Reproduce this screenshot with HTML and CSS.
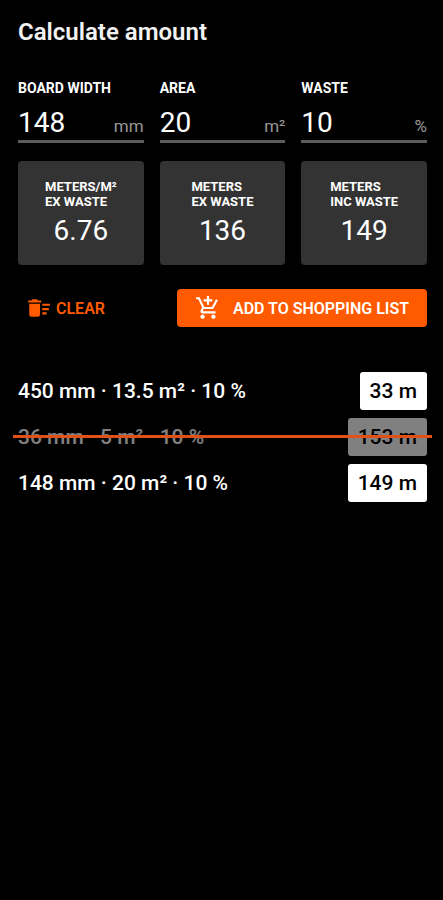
FILE: index.html
```
<!DOCTYPE html>
<html lang="en">
<head>
    <meta charset="UTF-8">
    <meta name="viewport" content="width=device-width, initial-scale=1.0">
    <title>Calculate amount</title>
    <link rel="stylesheet" href="styles.css">
</head>
<body>
    <main class="page">
        <h1>Calculate amount</h1>

        <form id="form">
            <div class="columns">
                <div class="field">
                    <label for="width">BOARD WIDTH</label>
                    <div class="field-row">
                        <input type="text" id="width" value="148" inputmode="decimal">
                        <span class="unit">mm</span>
                    </div>
                </div>
                <div class="field">
                    <label for="area">AREA</label>
                    <div class="field-row">
                        <input type="text" id="area" value="20" inputmode="decimal">
                        <span class="unit">m²</span>
                    </div>
                </div>
                <div class="field">
                    <label for="waste">WASTE</label>
                    <div class="field-row">
                        <input type="text" id="waste" value="10" inputmode="decimal">
                        <span class="unit">%</span>
                    </div>
                </div>
            </div>

            <div class="columns results">
                <div class="card">
                    <div class="card-label">METERS/M²<br>EX WASTE</div>
                    <output>6.76</output>
                </div>
                <div class="card">
                    <div class="card-label">METERS<br>EX WASTE</div>
                    <output>136</output>
                </div>
                <div class="card">
                    <div class="card-label">METERS<br>INC WASTE</div>
                    <output>149</output>
                </div>
            </div>

            <div class="actions">
                <button type="reset" class="clear">
                    <svg class="icon" viewBox="0 0 24 24" aria-hidden="true"><path d="M15 16h4v2h-4zm0-8h7v2h-7zm0 4h6v2h-6zM3 18c0 1.1.9 2 2 2h6c1.1 0 2-.9 2-2V8H3v10zM14 5h-3l-1-1H6L5 5H2v2h12z"/></svg>
                    CLEAR
                </button>
                <button type="submit" class="add">
                    <svg class="icon" viewBox="0 0 24 24" aria-hidden="true"><path d="M11 9h2V6h3V4h-3V1h-2v3H8v2h3v3zm-4 9c-1.1 0-1.99.9-1.99 2S5.9 22 7 22s2-.9 2-2-.9-2-2-2zm10 0c-1.1 0-1.99.9-1.99 2s.89 2 1.99 2 2-.9 2-2-.9-2-2-2zm-9.83-3.25l.03-.12.9-1.63h7.45c.75 0 1.41-.41 1.75-1.03l3.86-7.01L19.42 4h-.01l-1.1 2-2.76 5H8.53l-.13-.27L6.16 6l-.95-2-.94-2H1v2h2l3.6 7.59-1.35 2.45c-.16.28-.25.61-.25.96 0 1.1.9 2 2 2h12v-2H7.42c-.13 0-.25-.11-.25-.25z"/></svg>
                    ADD TO SHOPPING LIST
                </button>
            </div>
        </form>

        <ul class="list">
            <li>
                <span class="item">450 mm · 13.5 m² · 10 %</span>
                <span class="total">33 m</span>
            </li>
            <li class="done">
                <span class="item">36 mm · 5 m² · 10 %</span>
                <span class="total">153 m</span>
            </li>
            <li>
                <span class="item">148 mm · 20 m² · 10 %</span>
                <span class="total">149 m</span>
            </li>
        </ul>
    </main>
</body>
</html>
```
FILE: styles.css
```
* {
    box-sizing: border-box;
}

body {
    margin: 0;
    background-color: #000;
    color: #fff;
    font-family: Roboto, "Liberation Sans", sans-serif;
}

.page {
    padding: 16px 16px 16px 18px;
}

h1 {
    margin: 0 0 32px;
    font-size: 24px;
    font-weight: 600;
    line-height: 32px;
    color: #f2f2f2;
}

/* Three equal columns, shared by the fields and the results */
.columns {
    display: grid;
    grid-template-columns: repeat(3, minmax(0, 1fr));
    gap: 16px;
}

.field label {
    display: block;
    font-size: 14px;
    font-weight: 700;
    line-height: 16px;
}

.field-row {
    display: flex;
    align-items: baseline;
    margin-top: 8px;
    border-bottom: 3px solid #5c5c5c;
}

.field input {
    flex: 1;
    min-width: 0;
    height: 36px;
    padding: 0;
    border: none;
    outline: none;
    background: none;
    color: #fff;
    font-family: inherit;
    font-size: 28px;
}

.unit {
    font-size: 17px;
    color: #999;
}

/* Results */
.results {
    margin-top: 18px;
}

.card {
    display: flex;
    flex-direction: column;
    align-items: center;
    padding: 18px 8px 16px;
    border-radius: 4px;
    background-color: #333;
}

.card-label {
    font-size: 13px;
    font-weight: 700;
    line-height: 15px;
}

.card output {
    margin-top: 4px;
    font-size: 28px;
    line-height: 36px;
}

/* Buttons */
.actions {
    display: flex;
    justify-content: space-between;
    margin-top: 24px;
}

button {
    display: flex;
    align-items: center;
    height: 38px;
    border: none;
    border-radius: 4px;
    font-family: inherit;
    font-size: 16px;
    font-weight: 600;
    cursor: pointer;
}

.icon {
    width: 26px;
    height: 26px;
    fill: currentColor;
}

.clear {
    gap: 4px;
    padding: 0 8px;
    background: none;
    color: #ff5a00;
}

.add {
    gap: 12px;
    padding: 0 18px;
    background-color: #ff5a00;
    color: #fff;
}

/* Shopping list */
.list {
    display: flex;
    flex-direction: column;
    gap: 8px;
    margin: 45px 0 0;
    padding: 0;
    list-style: none;
    font-size: 21px;
    font-weight: 500;
}

.list li {
    position: relative;
    display: flex;
    align-items: center;
    justify-content: space-between;
}

.total {
    padding: 0 10px;
    border-radius: 3px;
    background-color: #fff;
    color: #000;
    line-height: 38px;
}

.done .item,
.done .total {
    opacity: 0.5;
}

.done::after {
    content: "";
    position: absolute;
    top: 50%;
    left: -5px;
    right: -5px;
    height: 3px;
    margin-top: -2px;
    background-color: #e0511a;
}
```
